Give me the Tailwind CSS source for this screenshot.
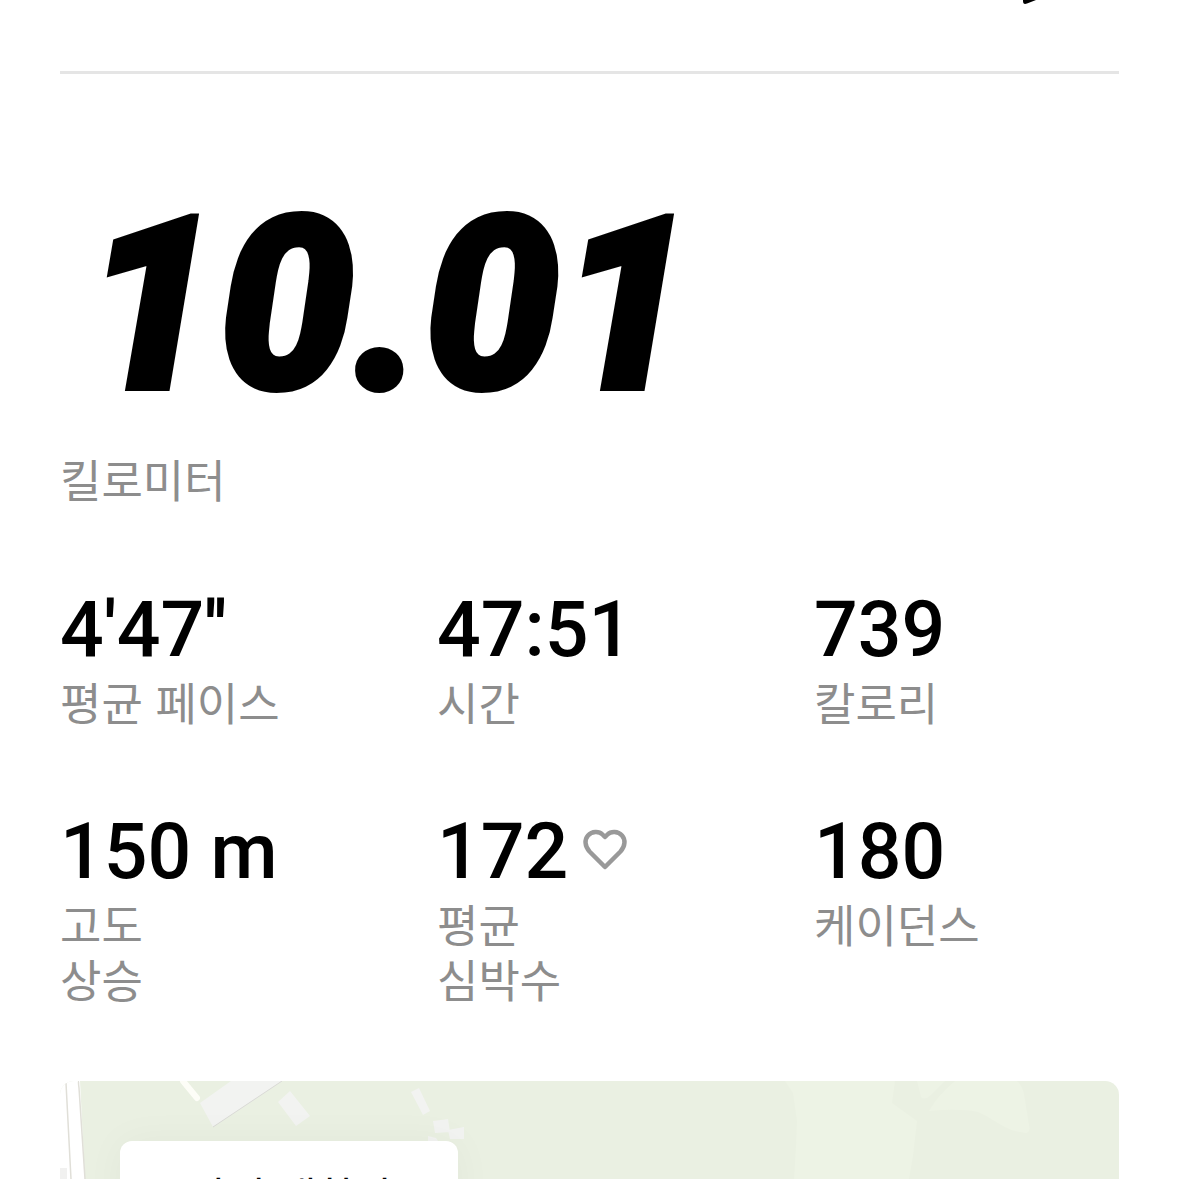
<!DOCTYPE html>
<html lang="ko">
<head>
  <meta charset="UTF-8">
  <meta name="viewport" content="width=device-width, initial-scale=1.0">
  <title>러닝 기록</title>
  <script src="https://cdn.jsdelivr.net/npm/@tailwindcss/browser@4"></script>
</head>
<body class="bg-white">
  <div class="h-screen overflow-hidden flex flex-col px-[60px] font-['Noto_Sans_CJK_KR',sans-serif] text-[45px] leading-[55px] text-[#8d8d8d]">

    <!-- Header -->
    <header class="h-[74px] shrink-0 flex items-start justify-end border-b-3 border-[#e5e5e5]">
      <button aria-label="이름 수정" class="block">
        <svg class="block w-24 h-[5px]" viewBox="0 0 96 5"><path d="M0 0H13L4 3.500Q0 5 0 1Z" fill="#000"/></svg>
      </button>
    </header>

    <!-- Distance -->
    <section class="shrink-0">
      <h1 class="pt-[102px] pl-6 h-[377px] text-[240px] leading-[260px] font-[Roboto,sans-serif] font-black italic text-black [-webkit-text-stroke:6px_#000]">10.01</h1>
      <p>킬로미터</p>
    </section>

    <!-- Stats -->
    <dl class="mt-20 shrink-0 grid grid-cols-3 gap-x-[72px] gap-y-[79px]">
      <div class="flex flex-col-reverse justify-end">
        <dt>평균 페이스</dt>
        <dd class="font-[Roboto,sans-serif] font-medium text-[77px] leading-[88px] text-black">4'47''</dd>
      </div>
      <div class="flex flex-col-reverse justify-end">
        <dt>시간</dt>
        <dd class="font-[Roboto,sans-serif] font-medium text-[77px] leading-[88px] text-black">47:51</dd>
      </div>
      <div class="flex flex-col-reverse justify-end">
        <dt>칼로리</dt>
        <dd class="font-[Roboto,sans-serif] font-medium text-[77px] leading-[88px] text-black">739</dd>
      </div>
      <div class="flex flex-col-reverse justify-end">
        <dt>고도<br>상승</dt>
        <dd class="font-[Roboto,sans-serif] font-medium text-[77px] leading-[88px] text-black">150 m</dd>
      </div>
      <div class="flex flex-col-reverse justify-end">
        <dt>평균<br>심박수</dt>
        <dd class="flex items-center gap-3.5 font-[Roboto,sans-serif] font-medium text-[77px] leading-[88px] text-black">
          172
          <svg class="w-[46px] h-[46px]" viewBox="0 0 46 46" fill="none" stroke="#999" stroke-width="4.500" stroke-linejoin="round"><path d="M23 38 7.500 22.500C2.500 17 2.500 10.500 6 6.500 10 2 17 2 20.500 5.500L23 8 25.500 5.500C29 2 36 2 40 6.500 43.500 10.500 43.500 17 38.500 22.500Z"/></svg>
        </dd>
      </div>
      <div class="flex flex-col-reverse justify-end">
        <dt>케이던스</dt>
        <dd class="font-[Roboto,sans-serif] font-medium text-[77px] leading-[88px] text-black">180</dd>
      </div>
    </dl>

    <!-- Map -->
    <section class="relative mt-[75px] flex-1 rounded-t-[14px] overflow-hidden bg-[#eaf0e2]">
      <svg class="absolute top-0 left-0 w-[1059px] h-[98px]" viewBox="0 0 1059 98">
        <path d="M725 0 733 12 737 40 736 65 734 98H849L853 75 857 40 832 22 835 0Z" fill="#edf3e5"/>
        <path d="M857 0 861 16Q864 20 871 14L885 0ZM895 0Q878 14 869 30 900 27 918 31C935 38 945 51 967 52Q971 50 969 44L964 13Q962 4 957 0Z" fill="#edf3e5"/>
        <path d="M0 0H20L25 98H0Z" fill="#fff"/>
        <path d="M19 0Q18 0 19 7L25 98M6 2 11 98" fill="none" stroke="#e0dfd8" stroke-width="1.500"/>
        <path d="M0 87H7V98H0Z" fill="#f1f1f0"/>
        <path d="M123 0 137 17" stroke="#fdfdf7" stroke-width="6" stroke-linecap="round"/>
        <g fill="#f2f3f1">
          <path d="M140 22 171 0H222L153 46ZM218 21 230 10 250 35 236 45ZM351 11 359 7 370 30 363 34ZM373 40 388 38 390 51 375 52ZM388 49 404 46V58H390ZM368 55 376 57 378 60H368Z"/>
        </g>
        <path d="M222 0 153 46" stroke="#d9d9d6"/>
      </svg>
      <button class="absolute top-[60px] left-[60px] w-[338px] h-[140px] px-[30px] pt-[30px] flex items-start rounded-xl bg-white shadow-[0_0_40px_rgba(0,0,0,0.04)] text-[42px] leading-[48px] text-black">스카이 대학가</button>
    </section>

  </div>
</body>
</html>
